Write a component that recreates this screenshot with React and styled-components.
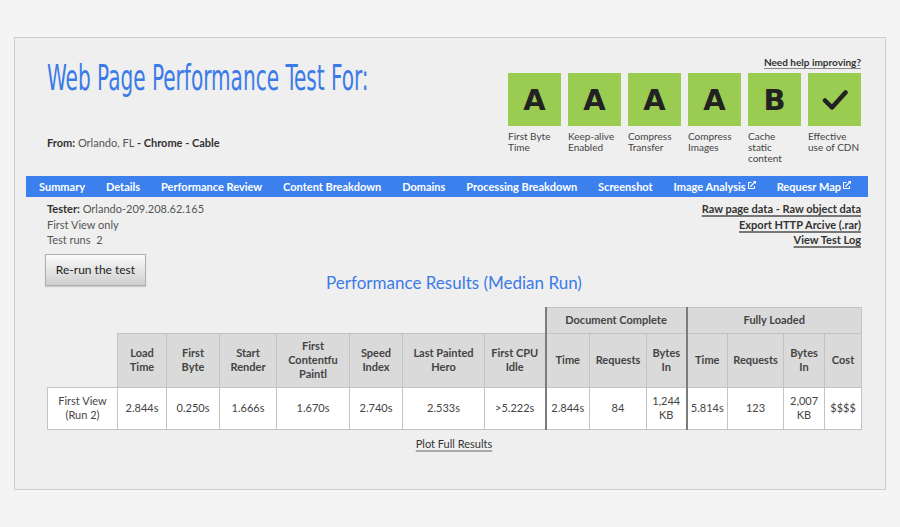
import React from "react";
import styled, { createGlobalStyle } from "styled-components";
import { FaExternalLinkAlt } from "react-icons/fa";

const GlobalStyle = createGlobalStyle`
  html, body {
    margin: 0;
    padding: 0;
    background: #f4f4f4;
    font-family: Lato, "Open Sans", sans-serif;
    color: #444;
  }
  * { box-sizing: border-box; }
`;

const Page = styled.div`
  padding: 37px 14px 0;
`;

const Panel = styled.div`
  height: 453px;
  background: #efefef;
  border: 1px solid #cdcdcd;
  padding: 0 17px 0 11px;
`;

const Inner = styled.div`
  padding: 0 7px 0 21px;
`;

const Header = styled.div`
  display: flex;
  justify-content: space-between;
  padding-top: 17px;
  height: 138px;
`;

const TitleColumn = styled.div`
  flex: 1;
  min-width: 0;
  display: flex;
  flex-direction: column;
  padding-top: 3px;
`;

const TitleWrap = styled.div`
  height: 40px;
`;

const Title = styled.h1`
  margin: 0;
  font-family: "Liberation Sans Narrow", "DejaVu Sans Condensed", "Liberation Sans", sans-serif;
  font-stretch: condensed;
  font-weight: 400;
  font-size: 36px;
  line-height: 40px;
  color: #3b7be8;
  white-space: nowrap;
  display: inline-block;
  transform: scaleX(0.62);
  transform-origin: left center;
`;

const From = styled.div`
  margin-top: 38px;
  font-size: 11px;
  line-height: 14px;
  color: #555;
  b { color: #333; }
`;

const GradeColumn = styled.div`
  flex-shrink: 0;
  display: flex;
  flex-direction: column;
  align-items: flex-end;
`;

const HelpLink = styled.a`
  font-size: 10px;
  line-height: 14px;
  font-weight: 700;
  color: #333;
  text-decoration: underline;
  text-decoration-color: #888;
  text-underline-offset: 2px;
`;

const Grades = styled.div`
  display: flex;
  gap: 7px;
  margin-top: 4px;
`;

const Grade = styled.div`
  width: 53px;
`;

const GradeBox = styled.div`
  height: 53px;
  background: #99cc50;
  display: flex;
  align-items: center;
  justify-content: center;
  font-family: "DejaVu Sans", sans-serif;
  font-weight: 700;
  font-size: 29px;
  color: #222;
`;

const GradeLabel = styled.div`
  margin-top: 5px;
  font-size: 10px;
  line-height: 11px;
  color: #444;
`;

const Nav = styled.nav`
  height: 21px;
  background: #3b80ec;
  display: flex;
  align-items: center;
  justify-content: space-between;
  padding: 0 17px 0 13px;
`;

const NavItem = styled.a`
  font-size: 11px;
  font-weight: 700;
  color: #fff;
  white-space: nowrap;
  display: inline-flex;
  align-items: center;
  gap: 2px;
  svg { width: 8px; height: 8px; margin-top: -4px; }
`;

const Info = styled.div`
  display: flex;
  justify-content: space-between;
  margin-top: 4px;
  font-size: 11px;
  line-height: 15.5px;
`;

const InfoLeft = styled.div`
  color: #555;
  b { color: #333; }
`;

const InfoRight = styled.div`
  display: flex;
  flex-direction: column;
  align-items: flex-end;
`;

const InfoLink = styled.a`
  font-weight: 700;
  color: #333;
  text-decoration: underline;
  text-decoration-color: #777;
  text-decoration-thickness: 1.5px;
  text-underline-offset: 2px;
`;

const ResultsRow = styled.div`
  display: grid;
  grid-template-columns: 1fr auto 1fr;
  align-items: end;
  margin-top: 6px;
`;

const RerunButton = styled.button`
  justify-self: start;
  margin-left: -2px;
  width: 101px;
  height: 32px;
  font-family: Lato, sans-serif;
  font-size: 12px;
  color: #222;
  border: 1px solid #b0b0b0;
  background: linear-gradient(#fafafa, #cfcfcf);
  box-shadow: 0 1px 1px rgba(0, 0, 0, 0.15);
  cursor: pointer;
`;

const ResultsTitle = styled.h2`
  margin: 0 0 -8px;
  font-size: 17px;
  line-height: 22px;
  font-weight: 400;
  color: #3b7be8;
`;

const Table = styled.table`
  margin-top: 21px;
  width: 814px;
  table-layout: fixed;
  border-collapse: collapse;
  font-size: 11px;
  line-height: 14px;
  text-align: center;
`;

const Th = styled.th`
  background: ${(p) => (p.$blank ? "transparent" : "#dadada")};
  border: ${(p) => (p.$blank ? "none" : "1px solid #c3c3c3")};
  border-left: ${(p) => (p.$split ? "2px solid #7c7c7c" : undefined)};
  font-weight: 700;
  color: #444;
  padding: 0 3px;
  height: ${(p) => p.$h}px;
`;

const Td = styled.td`
  background: #fff;
  border: 1px solid #c3c3c3;
  border-left: ${(p) => (p.$split ? "2px solid #7c7c7c" : undefined)};
  color: #444;
  padding: 0 3px;
  height: 42px;
`;

const PlotLink = styled.a`
  display: block;
  width: max-content;
  margin: 7px auto 0;
  font-size: 11px;
  line-height: 14px;
  color: #333;
  text-decoration: underline;
  text-decoration-color: #aaa;
  text-decoration-thickness: 2px;
  text-underline-offset: 2px;
`;

const Check = () => (
  <svg width="26" height="24" viewBox="0 0 26 24">
    <path d="M3 12.5 L10 19.5 L23.5 4.5" fill="none" stroke="#222" strokeWidth="4.5" strokeLinecap="round" strokeLinejoin="round" />
  </svg>
);

const grades = [
  { value: "A", label: ["First Byte", "Time"] },
  { value: "A", label: ["Keep-alive", "Enabled"] },
  { value: "A", label: ["Compress", "Transfer"] },
  { value: "A", label: ["Compress", "Images"] },
  { value: "B", label: ["Cache", "static", "content"] },
  { value: "check", label: ["Effective", "use of CDN"] },
];

const navItems = [
  { text: "Summary" },
  { text: "Details" },
  { text: "Performance Review" },
  { text: "Content Breakdown" },
  { text: "Domains" },
  { text: "Processing Breakdown" },
  { text: "Screenshot" },
  { text: "Image Analysis", ext: true },
  { text: "Requesr Map", ext: true },
];

const colWidths = [70, 49, 53, 57, 73, 53, 82, 61, 44, 57, 40, 41, 56, 41, 37];

export default function App() {
  return (
    <>
      <GlobalStyle />
      <Page>
        <Panel>
          <Inner>
            <Header>
              <TitleColumn>
                <TitleWrap>
                  <Title>Web Page Performance Test For:</Title>
                </TitleWrap>
                <From>
                  <b>From:</b> Orlando, FL <b>- Chrome - Cable</b>
                </From>
              </TitleColumn>
              <GradeColumn>
                <HelpLink>Need help improving?</HelpLink>
                <Grades>
                  {grades.map((g, i) => (
                    <Grade key={i}>
                      <GradeBox>{g.value === "check" ? <Check /> : g.value}</GradeBox>
                      <GradeLabel>
                        {g.label.map((l) => (
                          <div key={l}>{l}</div>
                        ))}
                      </GradeLabel>
                    </Grade>
                  ))}
                </Grades>
              </GradeColumn>
            </Header>
          </Inner>

          <Nav>
            {navItems.map((n) => (
              <NavItem key={n.text}>
                {n.text}
                {n.ext && <FaExternalLinkAlt />}
              </NavItem>
            ))}
          </Nav>

          <Inner>
            <Info>
              <InfoLeft>
                <div>
                  <b>Tester:</b> Orlando-209.208.62.165
                </div>
                <div>First View only</div>
                <div>Test runs&nbsp; 2</div>
              </InfoLeft>
              <InfoRight>
                <InfoLink>Raw page data - Raw object data</InfoLink>
                <InfoLink>Export HTTP Arcive (.rar)</InfoLink>
                <InfoLink>View Test Log</InfoLink>
              </InfoRight>
            </Info>

            <ResultsRow>
              <RerunButton>Re-run the test</RerunButton>
              <ResultsTitle>Performance Results (Median Run)</ResultsTitle>
              <div />
            </ResultsRow>

            <Table>
              <colgroup>
                {colWidths.map((w, i) => (
                  <col key={i} style={{ width: w }} />
                ))}
              </colgroup>
              <thead>
                <tr>
                  <Th $blank colSpan={8} $h={26} />
                  <Th colSpan={3} $split $h={26}>Document Complete</Th>
                  <Th colSpan={4} $split $h={26}>Fully Loaded</Th>
                </tr>
                <tr>
                  <Th $blank $h={54} />
                  <Th $h={54}>Load Time</Th>
                  <Th $h={54}>First Byte</Th>
                  <Th $h={54}>Start Render</Th>
                  <Th $h={54}>First Contentfu Paintl</Th>
                  <Th $h={54}>Speed Index</Th>
                  <Th $h={54}>Last Painted Hero</Th>
                  <Th $h={54}>First CPU Idle</Th>
                  <Th $h={54} $split>Time</Th>
                  <Th $h={54}>Requests</Th>
                  <Th $h={54}>Bytes In</Th>
                  <Th $h={54} $split>Time</Th>
                  <Th $h={54}>Requests</Th>
                  <Th $h={54}>Bytes In</Th>
                  <Th $h={54}>Cost</Th>
                </tr>
              </thead>
              <tbody>
                <tr>
                  <Td>First View (Run 2)</Td>
                  <Td>2.844s</Td>
                  <Td>0.250s</Td>
                  <Td>1.666s</Td>
                  <Td>1.670s</Td>
                  <Td>2.740s</Td>
                  <Td>2.533s</Td>
                  <Td>&gt;5.222s</Td>
                  <Td $split>2.844s</Td>
                  <Td>84</Td>
                  <Td>1,244 KB</Td>
                  <Td $split>5.814s</Td>
                  <Td>123</Td>
                  <Td>2,007 KB</Td>
                  <Td>$$$$</Td>
                </tr>
              </tbody>
            </Table>

            <PlotLink>Plot Full Results</PlotLink>
          </Inner>
        </Panel>
      </Page>
    </>
  );
}
